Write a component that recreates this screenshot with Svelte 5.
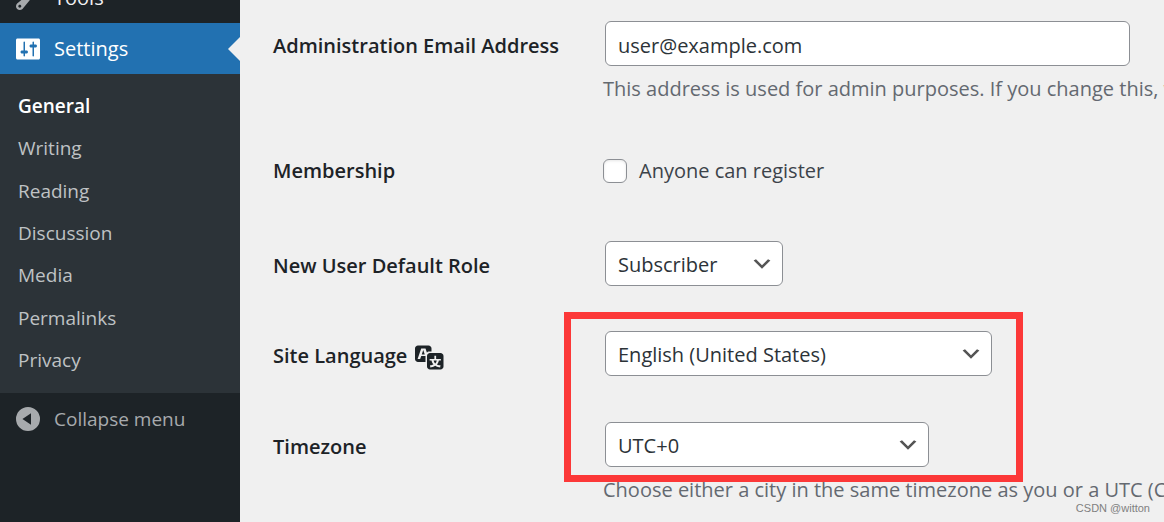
<script>
  const pages = ['General', 'Writing', 'Reading', 'Discussion', 'Media', 'Permalinks', 'Privacy'];
  let email = $state('user@example.com');
  let register = $state(false);
  let role = $state('Subscriber');
  let language = $state('English (United States)');
  let timezone = $state('UTC+0');
</script>

<div class="page">
  <nav class="sidebar" aria-label="Main menu">
    <a class="item" href="#tools">
      <svg class="icon muted" viewBox="0 0 20 20" aria-hidden="true"><path d="M16.68 9.77c-1.34 1.34-3.3 1.67-4.95.99l-5.41 6.52c-.99.99-2.59.99-3.58 0s-.99-2.59 0-3.57l6.52-5.42c-.68-1.65-.35-3.61.99-4.95 1.28-1.28 3.12-1.62 4.72-1.06l-2.89 2.89 2.82 2.82 2.86-2.87c.53 1.58.18 3.39-1.08 4.65zM3.81 16.21c.4.39 1.04.39 1.43 0 .4-.4.4-1.04 0-1.43-.39-.4-1.03-.4-1.43 0-.39.39-.39 1.03 0 1.43z" /></svg>
      <span>Tools</span>
    </a>
    <a class="item current" href="#settings">
      <svg class="icon" viewBox="0 0 20 20" aria-hidden="true"><path d="M18 16V4c0-.55-.45-1-1-1H3c-.55 0-1 .45-1 1v12c0 .55.45 1 1 1h14c.55 0 1-.45 1-1zM8 11h1c.55 0 1 .45 1 1s-.45 1-1 1H8v1.5c0 .28-.22.5-.5.5s-.5-.22-.5-.5V13H6c-.55 0-1-.45-1-1s.45-1 1-1h1V5.5c0-.28.22-.5.5-.5s.5.22.5.5V11zm5-2h-1c-.55 0-1-.45-1-1s.45-1 1-1h1V5.5c0-.28.22-.5.5-.5s.5.22.5.5V7h1c.55 0 1 .45 1 1s-.45 1-1 1h-1v5.5c0 .28-.22.5-.5.5s-.5-.22-.5-.5V9z" /></svg>
      <span>Settings</span>
    </a>
    <div class="submenu">
      {#each pages as page, i}
        <a class:active={i === 0} href="#{page.toLowerCase()}">{page}</a>
      {/each}
    </div>
    <button class="item collapse" type="button">
      <svg class="icon" viewBox="0 0 20 20" aria-hidden="true"><path fill-rule="evenodd" d="M10 2a8 8 0 1 0 0 16 8 8 0 0 0 0-16zM12 6.2v7.6L6.3 10z" /></svg>
      <span>Collapse menu</span>
    </button>
  </nav>

  <main>
    <form>
      <div class="row">
        <label class="title" for="email">Administration Email Address</label>
        <div class="field">
          <input id="email" class="control wide" type="email" bind:value={email} />
          <p>This address is used for admin purposes. If you change this, we will send you an email.</p>
        </div>
      </div>
      <div class="row membership">
        <span class="title">Membership</span>
        <div class="field">
          <label class="check"><input type="checkbox" bind:checked={register} />Anyone can register</label>
        </div>
      </div>
      <div class="row">
        <label class="title" for="role">New User Default Role</label>
        <div class="field">
          <select id="role" class="control role" bind:value={role}><option>Subscriber</option></select>
        </div>
      </div>
      <div class="marked">
        <div class="row">
          <label class="title" for="language">Site Language
            <svg class="icon" viewBox="0 0 20 20" aria-hidden="true"><path d="M11 7H9.49c-.63 0-1.25.3-1.59.7L7 5H4.13l-2.39 7h1.69l.74-2H7v4H2c-1.1 0-2-.9-2-2V5c0-1.1.9-2 2-2h7c1.1 0 2 .9 2 2v2zM6.51 9H4.49l1-2.93zM10 8h7c1.1 0 2 .9 2 2v7c0 1.1-.9 2-2 2h-7c-1.1 0-2-.9-2-2v-7c0-1.1.9-2 2-2zm7.25 5v-1.08h-3.17V9.75h-1.16v2.17H9.75V13h1.28c.11.85.56 1.85 1.28 2.62-.87.36-1.89.62-2.31.62-.01.02.22.97.2 1.46.84 0 2.21-.5 3.28-1.15 1.09.65 2.48 1.15 3.34 1.15-.02-.49.2-1.44.2-1.46-.43 0-1.49-.27-2.38-.63.7-.77 1.14-1.77 1.25-2.61h1.36zm-3.81 1.93c-.5-.46-.85-1.13-1.01-1.93h2.09c-.17.8-.51 1.47-1 1.93l-.04.03s-.03-.02-.04-.03z" /></svg>
          </label>
          <div class="field">
            <select id="language" class="control language" bind:value={language}><option>English (United States)</option></select>
          </div>
        </div>
        <div class="row">
          <label class="title" for="timezone">Timezone</label>
          <div class="field">
            <select id="timezone" class="control timezone" bind:value={timezone}><option>UTC+0</option></select>
            <p>Choose either a city in the same timezone as you or a UTC (Coordinated Universal Time) time offset.</p>
          </div>
        </div>
        <div class="frame"></div>
      </div>
    </form>
    <small class="credit">CSDN @witton</small>
  </main>
</div>

<style>
  :global(body) {
    margin: 0;
    background: #f0f0f0;
  }
  .page {
    display: flex;
    height: 100vh;
    overflow: hidden;
    background: #f0f0f0;
    color: #1d2327;
    font-family: "Segoe UI", "Open Sans", sans-serif;
    font-size: 20px;
  }
  .sidebar {
    flex: 0 0 240px;
    margin-top: -28px;
    background: #1d2327;
  }
  .item {
    position: relative;
    display: flex;
    align-items: center;
    gap: 11px;
    box-sizing: border-box;
    width: 100%;
    height: 51px;
    padding: 0 13px;
    border: 0;
    background: none;
    color: #f0f0f1;
    font: inherit;
    line-height: 28px;
    text-align: left;
    text-decoration: none;
  }
  .icon {
    flex: none;
    width: 30px;
    height: 30px;
    fill: currentColor;
  }
  .muted {
    color: #a7aaad;
  }
  .current {
    background: #2271b1;
    color: #fff;
  }
  .current::after {
    content: "";
    position: absolute;
    right: 0;
    border: 12px solid transparent;
    border-left: 0;
    border-right-color: #f0f0f0;
  }
  .submenu {
    display: grid;
    grid-auto-rows: 1fr;
    box-sizing: border-box;
    min-height: 319px;
    padding: 11px 0 12px;
    background: #2c3338;
  }
  .submenu a {
    display: flex;
    align-items: center;
    padding: 0 18px;
    color: #bfc2c4;
    font-size: 19px;
    text-decoration: none;
  }
  .submenu .active {
    color: #fff;
    font-weight: 600;
  }
  .collapse {
    color: #a7aaad;
    font-size: 19px;
  }
  main {
    position: relative;
    flex: 1;
    min-width: 0;
    overflow: hidden;
  }
  form {
    display: flex;
    flex-direction: column;
    gap: 44px;
    padding: 21px 0 0 33px;
  }
  .row {
    display: grid;
    grid-template-columns: 330px minmax(0, 1fr);
  }
  .membership {
    margin-bottom: 4px;
  }
  .title {
    display: flex;
    align-items: center;
    gap: 8px;
    height: 45px;
    padding-top: 5px;
    box-sizing: border-box;
    font-weight: 560;
    line-height: 28px;
  }
  .membership .title {
    padding-top: 0;
  }
  .control {
    display: block;
    box-sizing: border-box;
    height: 45px;
    max-width: 100%;
    margin: 0 2px;
    padding: 3px 12px 0;
    border: 1px solid #8c8f94;
    border-radius: 6px;
    background: #fff;
    color: #2c3338;
    font: inherit;
  }
  select.control {
    appearance: none;
    padding-top: 2px;
    background: #fff url("data:image/svg+xml,%3Csvg xmlns='http://www.w3.org/2000/svg' viewBox='0 0 20 20'%3E%3Cpath d='M5 6l5 5 5-5 2 1-7 7-7-7 2-1z' fill='%23555'/%3E%3C/svg%3E") no-repeat right 8px center / 24px 24px;
  }
  .wide {
    width: 525px;
  }
  .role {
    width: 178px;
  }
  .language {
    width: 387px;
  }
  .timezone {
    width: 324px;
  }
  p {
    margin: 8px 0 0;
    color: #646970;
    line-height: 30px;
    white-space: nowrap;
  }
  .check {
    display: inline-flex;
    align-items: center;
    gap: 12px;
    height: 45px;
    color: #3c434a;
  }
  .check input {
    appearance: none;
    box-sizing: border-box;
    width: 24px;
    height: 24px;
    margin: 0;
    border: 1px solid #8c8f94;
    border-radius: 6px;
    background: #fff;
    box-shadow: inset 0 1px 3px #0000001a;
  }
  .check input:checked {
    background: #2271b1;
  }
  .marked {
    position: relative;
    display: grid;
    gap: 46px;
    margin-top: 1px;
  }
  .frame {
    position: absolute;
    top: -19px;
    left: 291px;
    box-sizing: border-box;
    width: 459px;
    height: 170px;
    border: 7px solid #fc3838;
    pointer-events: none;
  }
  .credit {
    position: absolute;
    right: 14px;
    bottom: 6px;
    color: #808080;
    font: 11px/16px "Liberation Sans", sans-serif;
  }
</style>
